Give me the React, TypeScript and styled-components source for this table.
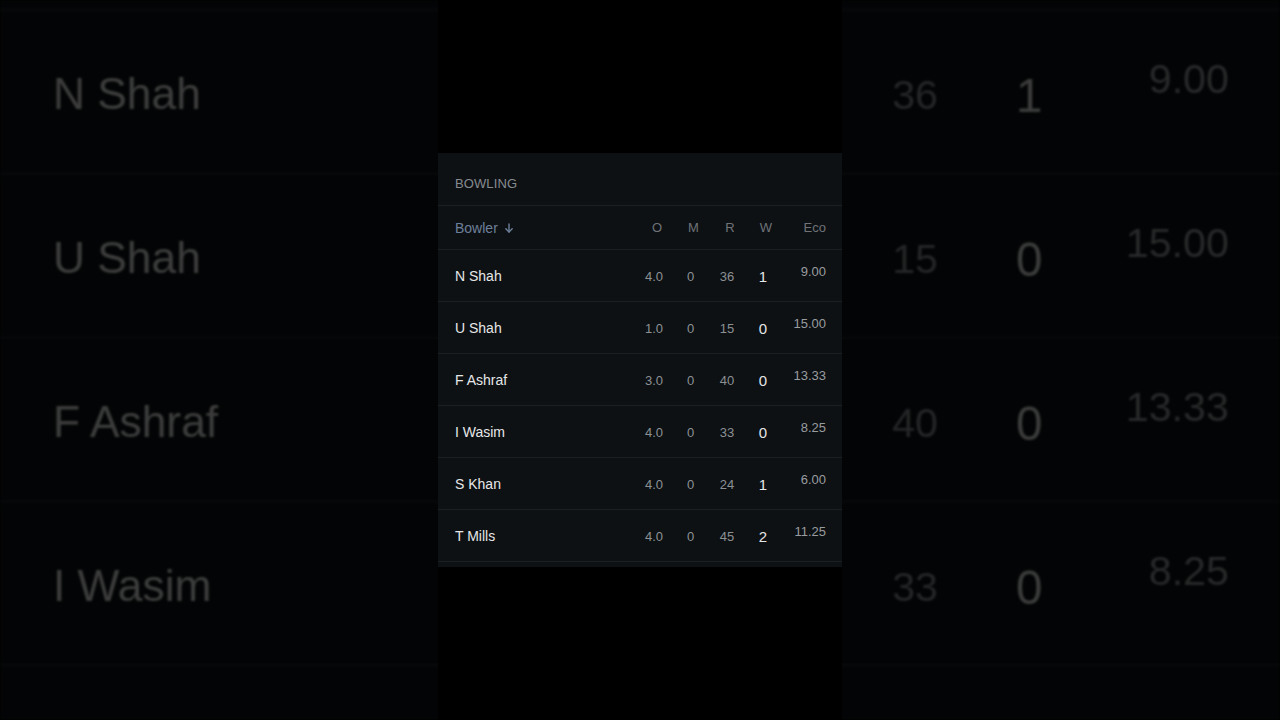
import React from "react";
import styled, { createGlobalStyle } from "styled-components";

const GlobalStyle = createGlobalStyle`
  html, body {
    margin: 0;
    padding: 0;
    background: #000;
  }
  body {
    font-family: "Liberation Sans", Arial, sans-serif;
  }
`;

type Bowler = { name: string; o: string; m: string; r: string; w: string; eco: string };

const bowlers: Bowler[] = [
  { name: "N Shah", o: "4.0", m: "0", r: "36", w: "1", eco: "9.00" },
  { name: "U Shah", o: "1.0", m: "0", r: "15", w: "0", eco: "15.00" },
  { name: "F Ashraf", o: "3.0", m: "0", r: "40", w: "0", eco: "13.33" },
  { name: "I Wasim", o: "4.0", m: "0", r: "33", w: "0", eco: "8.25" },
  { name: "S Khan", o: "4.0", m: "0", r: "24", w: "1", eco: "6.00" },
  { name: "T Mills", o: "4.0", m: "0", r: "45", w: "2", eco: "11.25" },
];

const Stage = styled.div`
  position: relative;
  width: 1280px;
  height: 720px;
  overflow: hidden;
  background: #000;
  display: flex;
  justify-content: center;
`;

const Backdrop = styled.div`
  position: absolute;
  inset: 0;
  overflow: hidden;
  opacity: 0.26;
  filter: blur(1.2px);
  pointer-events: none;
`;

const BackdropScale = styled.div`
  width: 404px;
  transform-origin: 0 0;
  transform: translate(-1px, -294px) scale(3.17, 3.15);
`;

const CenterColumn = styled.div`
  position: relative;
  z-index: 1;
  width: 404px;
  height: 720px;
  background: #000;
  display: flex;
  align-items: center;
`;

const Card = styled.section`
  width: 404px;
  box-sizing: border-box;
  background: #0d1114;
  padding-bottom: 5px;
`;

const Title = styled.div`
  box-sizing: border-box;
  height: 53px;
  padding: 23px 17px 0;
  border-bottom: 1px solid #1a1f23;
  font-size: 13px;
  line-height: 16px;
  letter-spacing: 0.1px;
  color: #878b90;
  text-transform: uppercase;
`;

const Row = styled.div<{ $head?: boolean }>`
  box-sizing: border-box;
  display: grid;
  grid-template-columns: 1fr 36px 37px 36px 36px 45px;
  align-items: center;
  height: ${(p) => (p.$head ? "44px" : "52px")};
  padding: 0 16px 0 17px;
  border-bottom: 1px solid #1a1f23;
`;

const HeadName = styled.div`
  display: flex;
  align-items: center;
  gap: 6px;
  font-size: 14px;
  color: #6d809a;
`;

const HeadCell = styled.div<{ $right?: boolean }>`
  font-size: 13px;
  color: #6f7378;
  text-align: ${(p) => (p.$right ? "right" : "center")};
  padding-left: ${(p) => (p.$right ? "0" : "6px")};
`;

const Name = styled.div`
  font-size: 14px;
  color: #e6e7e8;
  padding-top: 1px;
`;

const Stat = styled.div`
  font-size: 13px;
  color: #8c9093;
  text-align: center;
  padding-top: 1px;
`;

const Wickets = styled.div`
  font-size: 15px;
  color: #e4e5e6;
  text-align: center;
  padding-top: 2px;
`;

const Eco = styled.div`
  font-size: 13px;
  color: #999c9f;
  text-align: right;
  padding-bottom: 8px;
`;

const SortArrow = () => (
  <svg width="10" height="10" viewBox="0 0 10 10" fill="none" stroke="#6d809a" strokeWidth="1.4" strokeLinecap="round" strokeLinejoin="round">
    <path d="M5 1v8" />
    <path d="M1.8 5.8L5 9l3.2-3.2" />
  </svg>
);

const BowlingCard = () => (
  <Card>
    <Title>Bowling</Title>
    <Row $head>
      <HeadName>
        Bowler <SortArrow />
      </HeadName>
      <HeadCell>O</HeadCell>
      <HeadCell>M</HeadCell>
      <HeadCell>R</HeadCell>
      <HeadCell>W</HeadCell>
      <HeadCell $right>Eco</HeadCell>
    </Row>
    {bowlers.map((b) => (
      <Row key={b.name}>
        <Name>{b.name}</Name>
        <Stat>{b.o}</Stat>
        <Stat>{b.m}</Stat>
        <Stat>{b.r}</Stat>
        <Wickets>{b.w}</Wickets>
        <Eco>{b.eco}</Eco>
      </Row>
    ))}
  </Card>
);

export default function App() {
  return (
    <>
      <GlobalStyle />
      <Stage>
        <Backdrop aria-hidden>
          <BackdropScale>
            <BowlingCard />
          </BackdropScale>
        </Backdrop>
        <CenterColumn>
          <BowlingCard />
        </CenterColumn>
      </Stage>
    </>
  );
}
